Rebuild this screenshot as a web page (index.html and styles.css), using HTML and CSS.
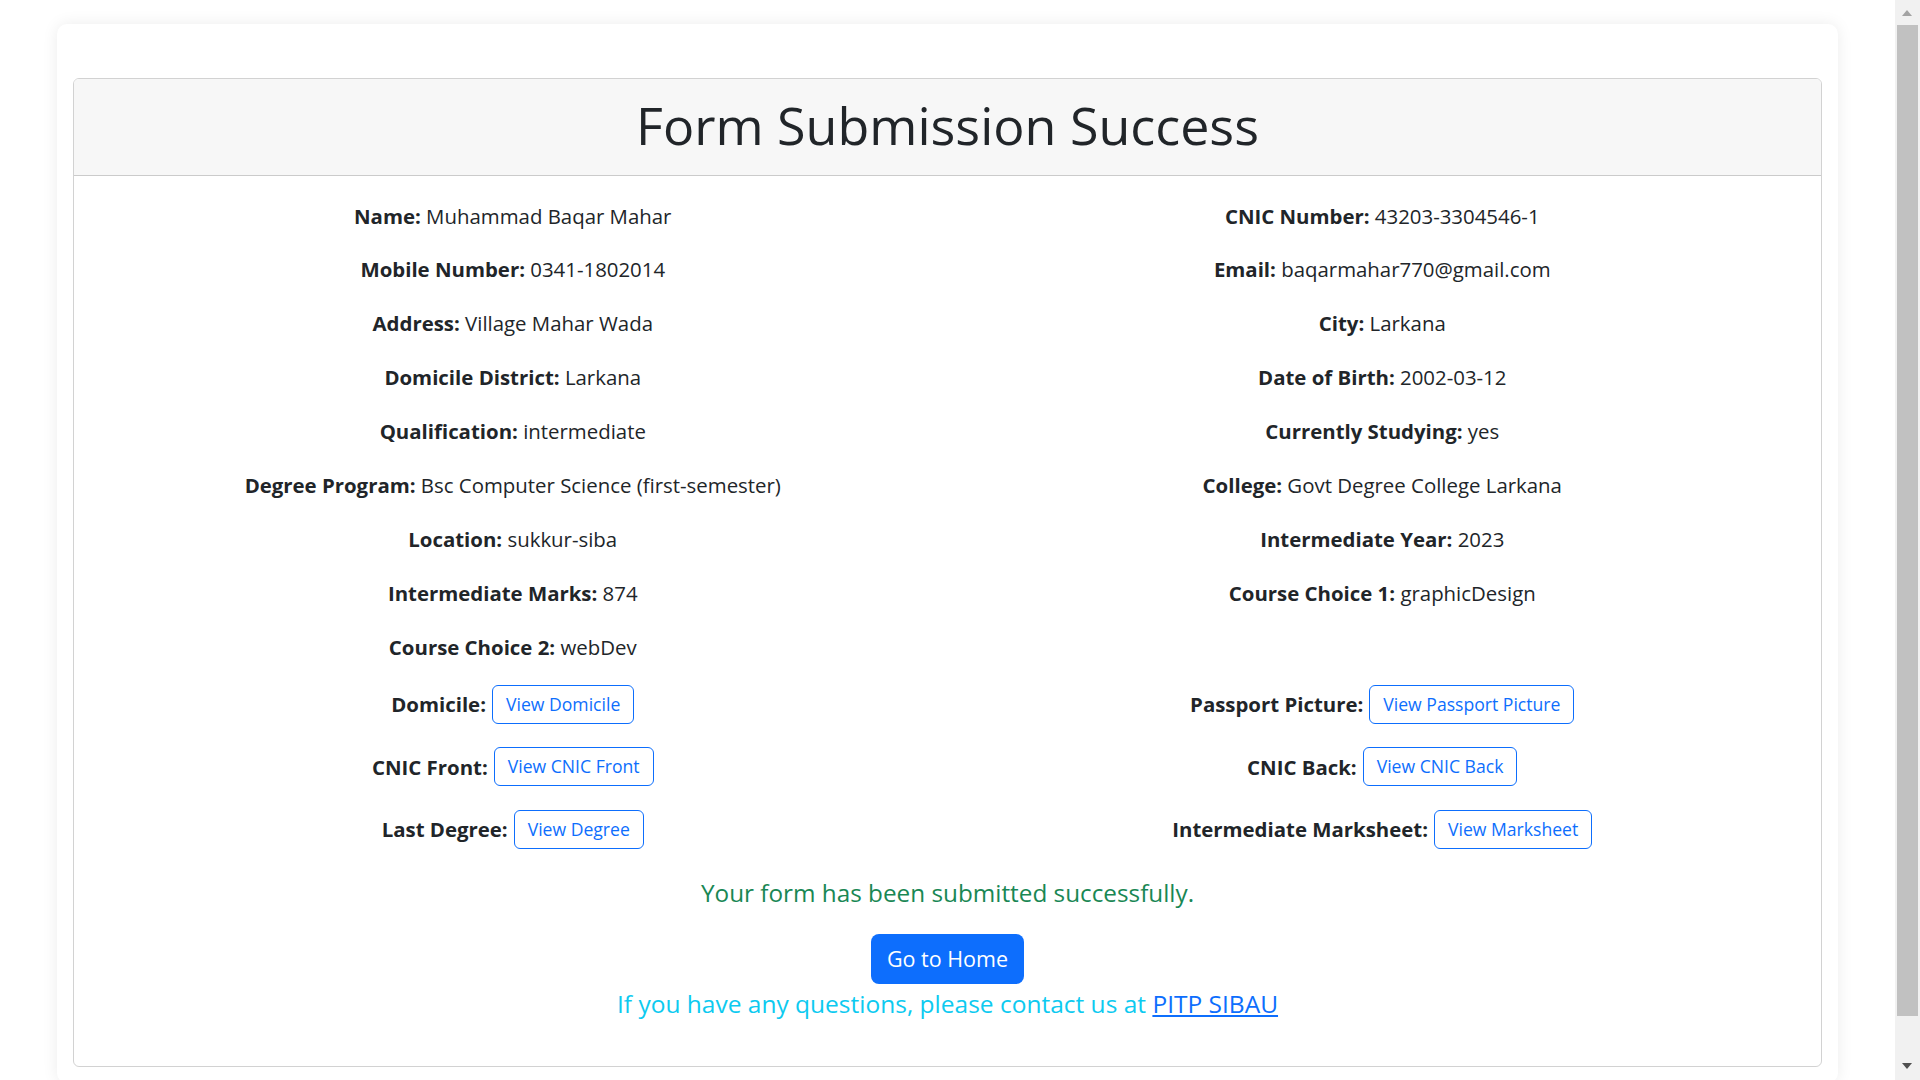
FILE: index.html
```html
<!DOCTYPE html>
<html lang="en">
<head>
<meta charset="utf-8">
<title>Form Submission Success</title>
<link rel="stylesheet" href="styles.css">
</head>
<body>
<div class="page">
  <main class="shell">
    <section class="card">
      <header class="card-head"><h1>Form Submission Success</h1></header>
      <div class="card-body">
        <div class="info">
          <div class="info-col">
            <p><strong>Name:</strong> Muhammad Baqar Mahar</p>
            <p><strong>Mobile Number:</strong> 0341-1802014</p>
            <p><strong>Address:</strong> Village Mahar Wada</p>
            <p><strong>Domicile District:</strong> Larkana</p>
            <p><strong>Qualification:</strong> intermediate</p>
            <p><strong>Degree Program:</strong> Bsc Computer Science (first-semester)</p>
            <p><strong>Location:</strong> sukkur-siba</p>
            <p><strong>Intermediate Marks:</strong> 874</p>
            <p><strong>Course Choice 2:</strong> webDev</p>
          </div>
          <div class="info-col">
            <p><strong>CNIC Number:</strong> 43203-3304546-1</p>
            <p><strong>Email:</strong> baqarmahar770@gmail.com</p>
            <p><strong>City:</strong> Larkana</p>
            <p><strong>Date of Birth:</strong> 2002-03-12</p>
            <p><strong>Currently Studying:</strong> yes</p>
            <p><strong>College:</strong> Govt Degree College Larkana</p>
            <p><strong>Intermediate Year:</strong> 2023</p>
            <p><strong>Course Choice 1:</strong> graphicDesign</p>
          </div>
        </div>
        <div class="docs">
          <div class="doc"><strong>Domicile:</strong> <a class="btn-outline" href="#">View Domicile</a></div>
          <div class="doc"><strong>Passport Picture:</strong> <a class="btn-outline" href="#">View Passport Picture</a></div>
          <div class="doc"><strong>CNIC Front:</strong> <a class="btn-outline" href="#">View CNIC Front</a></div>
          <div class="doc"><strong>CNIC Back:</strong> <a class="btn-outline" href="#">View CNIC Back</a></div>
          <div class="doc"><strong>Last Degree:</strong> <a class="btn-outline" href="#">View Degree</a></div>
          <div class="doc"><strong>Intermediate Marksheet:</strong> <a class="btn-outline" href="#">View Marksheet</a></div>
        </div>
        <p class="success">Your form has been submitted successfully.</p>
        <a class="btn-home" href="#">Go to Home</a>
        <p class="contact">If you have any questions, please contact us at <a href="#">PITP SIBAU</a></p>
      </div>
    </section>
  </main>
</div>
<div class="scrollbar">
  <span class="arrow-up"></span>
  <span class="thumb"></span>
  <span class="arrow-down"></span>
</div>
</body>
</html>
```
FILE: styles.css
```css
html, body {
  margin: 0;
  height: 100%;
  overflow: hidden;
  background: #fff;
}
body {
  font-family: "Open Sans", "Noto Sans", sans-serif;
  color: #212529;
  margin-right: 25px;
}
.page {
  padding: 24px 57px 0 57px;
}
.shell {
  background: #fff;
  border-radius: 10px;
  box-shadow: 0 0 16px rgba(0, 0, 0, 0.08);
  padding: 54px 16px 16px;
}
.card {
  border: 1px solid rgba(0, 0, 0, 0.175);
  border-radius: 6px;
  overflow: hidden;
}
.card-head {
  background: #f7f7f7;
  border-bottom: 1px solid rgba(0, 0, 0, 0.175);
  padding: 12px 16px 17px;
  text-align: center;
}
.card-head h1 {
  margin: 0;
  font-size: 52px;
  font-weight: 500;
  line-height: 67px;
  color: #212529;
}
.card-body {
  padding: 22.5px 16px 44px;
  text-align: center;
}
.info, .docs {
  display: grid;
  grid-template-columns: 1fr 1fr;
  margin: 0 -12px;
}
.docs {
  margin-top: 1.2px;
}
.info p {
  margin: 0 0 19.9px;
  font-size: 20.4px;
  line-height: 34px;
}
.info strong, .doc strong {
  font-weight: 700;
}
.doc {
  display: flex;
  justify-content: center;
  align-items: center;
  gap: 6px;
  height: 39px;
  margin-bottom: 23.5px;
  font-size: 20.4px;
}
.btn-outline {
  display: inline-block;
  box-sizing: border-box;
  height: 39px;
  line-height: 37px;
  padding: 0 13px;
  border: 1px solid #0d6efd;
  border-radius: 6px;
  color: #0d6efd;
  font-size: 17.6px;
  text-decoration: none;
}
.success {
  margin: 2.3px 0 23px;
  font-size: 24.3px;
  line-height: 36px;
  color: #198754;
}
.btn-home {
  display: inline-block;
  box-sizing: border-box;
  height: 50px;
  line-height: 50px;
  padding: 0 16px;
  border-radius: 8px;
  background: #0d6efd;
  color: #fff;
  font-size: 21.5px;
  text-decoration: none;
}
.contact {
  margin: 2px 0 0;
  font-size: 24.5px;
  line-height: 36px;
  color: #0dcaf0;
}
.contact a {
  color: #0d6efd;
  text-decoration: underline;
}
.scrollbar {
  position: fixed;
  top: 0;
  right: 0;
  width: 25px;
  height: 100%;
  background: #f1f1f1;
}
.thumb {
  position: absolute;
  left: 2px;
  right: 2px;
  top: 25px;
  bottom: 64px;
  background: #c1c1c1;
}
.arrow-up, .arrow-down {
  position: absolute;
  left: 7px;
  width: 0;
  height: 0;
  border-left: 5.5px solid transparent;
  border-right: 5.5px solid transparent;
}
.arrow-up {
  top: 10px;
  border-bottom: 6px solid #a3a3a3;
}
.arrow-down {
  bottom: 11px;
  border-top: 6px solid #505050;
}
```
